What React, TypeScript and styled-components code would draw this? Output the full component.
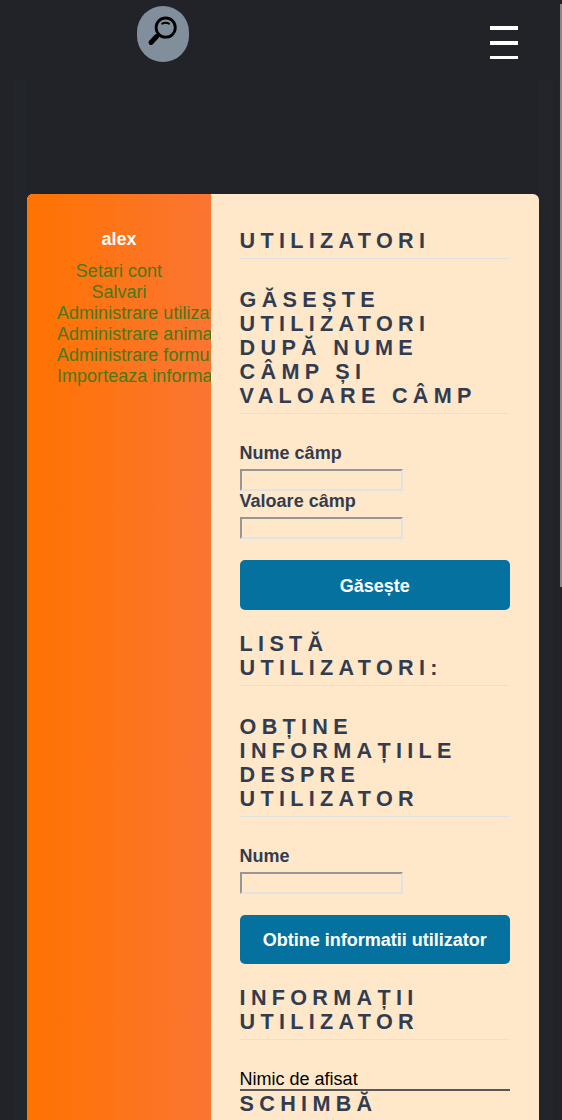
import React from 'react';
import styled, { createGlobalStyle } from 'styled-components';

const GlobalStyle = createGlobalStyle`
  *, *::before, *::after { box-sizing: border-box; }
  body {
    margin: 0;
    height: 1120px;
    overflow: hidden;
    background: #222328;
    font-family: 'Liberation Sans', Arial, sans-serif;
    font-size: 18px;
  }
`;

const Page = styled.div`
  height: 1120px;
  overflow: hidden;
`;

const Header = styled.header`
  display: flex;
  justify-content: space-between;
  height: 80px;
  padding: 6px 44px 0 137px;
`;

const SearchButton = styled.button`
  display: block;
  width: 52px;
  height: 56px;
  padding: 0;
  border: 0;
  border-radius: 26px;
  background: #818e9b;
`;

const MenuButton = styled.div`
  display: flex;
  flex-direction: column;
  gap: 11px;
  width: 28px;
  padding-top: 20px;
`;

const MenuBar = styled.span<{ $thin?: boolean }>`
  height: ${(p) => (p.$thin ? 3 : 4)}px;
  background: #fff;
`;

const Main = styled.main`
  margin: 0 9px 0 13px;
  padding: 114px 14px 0;
  background: linear-gradient(90deg, #222529 14px, #222328 14px, #222328 calc(100% - 14px), #222529 calc(100% - 14px));
`;

const Card = styled.div`
  display: flex;
  height: 1000px;
  border-radius: 6px;
  overflow: hidden;
  background: #ffe8c9;
`;

const Sidebar = styled.aside`
  flex: 0 0 184px;
  overflow: hidden;
  padding: 35px 30px 0;
  background: linear-gradient(90deg, #ff7300, #fb7533);
`;

const UserName = styled.div`
  margin: 0 0 11px;
  color: #fff;
  font-weight: bold;
  line-height: 21px;
  text-align: center;
`;

const NavLink = styled.a`
  display: block;
  color: #457a16;
  letter-spacing: 0.025px;
  line-height: 21px;
  text-align: center;
  white-space: nowrap;
`;

const Content = styled.section`
  flex: 1;
  padding: 35px 29px 0 28.6px;
`;

const Heading = styled.h2`
  margin: 0 0 29px;
  padding-bottom: 5px;
  border-bottom: 1px solid #dfe1e3;
  color: #323c50;
  font-size: 21.6px;
  letter-spacing: 5.3px;
  line-height: 24px;
  text-transform: uppercase;
`;

const Field = styled.label`
  display: block;
  height: 48px;
  color: #323c50;
  font-weight: bold;
  line-height: 21px;
`;

const TextInput = styled.input`
  display: block;
  width: 163px;
  height: 22px;
  margin-top: 5px;
  padding: 0;
  border: 2px solid;
  border-color: #969696 #e2e2e2 #e2e2e2 #969696;
  border-radius: 0;
  background: transparent;
`;

const SubmitButton = styled.button<{ $height: number }>`
  display: block;
  width: 100%;
  height: ${(p) => p.$height}px;
  margin: 21px 0 22px;
  padding: ${(p) => (p.$height > 49 ? 2 : 1)}px 0 0;
  border: 0;
  border-radius: 5px;
  background: #05719f;
  color: #fff;
  font: bold 18px 'Liberation Sans', Arial, sans-serif;
`;

const Result = styled.p`
  margin: 0 0 1px;
  border-bottom: 2px solid #55595c;
  color: #000;
  line-height: 20px;
`;

const ScrollThumb = styled.div`
  position: fixed;
  top: 4px;
  right: 0;
  width: 2px;
  height: 583px;
  background: #888;
`;

const links = [
  'Setari cont',
  'Salvari',
  'Administrare utilizatori',
  'Administrare animale',
  'Administrare formulare',
  'Importeaza informatii',
];

export default function App() {
  return (
    <Page>
      <GlobalStyle />
      <Header>
        <SearchButton aria-label="Search">
          <svg width="52" height="56" viewBox="0 0 52 56" fill="none" stroke="#000">
            <circle cx="28.7" cy="21.6" r="9.6" strokeWidth="2.8" />
            <path d="M25.2 17.6q3.4-1.9 6.8 0" strokeWidth="2" strokeLinecap="round" />
            <path d="M21.7 28.6 19.5 30.5" strokeWidth="3" />
            <path d="M19.6 30.6 14 36.4" strokeWidth="5" strokeLinecap="round" />
          </svg>
        </SearchButton>
        <MenuButton>
          <MenuBar />
          <MenuBar />
          <MenuBar $thin />
        </MenuButton>
      </Header>
      <Main>
        <Card>
          <Sidebar>
            <UserName>alex</UserName>
            {links.map((link) => (
              <NavLink key={link}>{link}</NavLink>
            ))}
          </Sidebar>
          <Content>
            <Heading>Utilizatori</Heading>
            <Heading>Găsește utilizatori după nume câmp și valoare câmp</Heading>
            <Field>
              Nume câmp
              <TextInput />
            </Field>
            <Field>
              Valoare câmp
              <TextInput />
            </Field>
            <SubmitButton $height={50}>Găsește</SubmitButton>
            <Heading>Listă utilizatori:</Heading>
            <Heading>Obține informațiile despre utilizator</Heading>
            <Field>
              Nume
              <TextInput />
            </Field>
            <SubmitButton $height={49}>Obtine informatii utilizator</SubmitButton>
            <Heading>Informații utilizator</Heading>
            <Result>Nimic de afisat</Result>
            <Heading>Schimbă</Heading>
          </Content>
        </Card>
      </Main>
      <ScrollThumb />
    </Page>
  );
}
